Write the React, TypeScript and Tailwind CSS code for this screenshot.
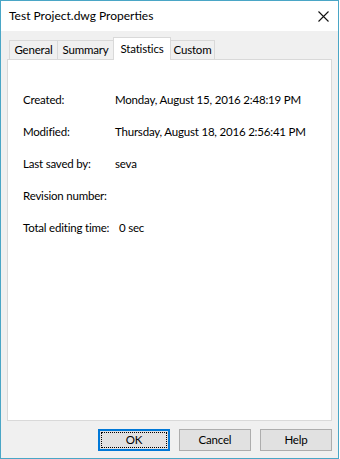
import React from 'react';

const tabs = [
  { name: 'General', w: 'w-[49px]' },
  { name: 'Summary', w: 'w-[57px]' },
  { name: 'Statistics', w: 'w-[58px]' },
  { name: 'Custom', w: 'w-[45px]' },
];

const rows = [
  { label: 'Created:', value: 'Monday, August 15, 2016 2:48:19 PM' },
  { label: 'Modified:', value: 'Thursday, August 18, 2016 2:56:41 PM' },
  { label: 'Last saved by:', value: 'seva' },
  { label: 'Revision number:', value: '' },
  { label: 'Total editing time:', value: '0 sec', shift: true },
];

export default function App() {
  return (
    <div className="w-[340px] h-[459px] bg-white" style={{ fontFamily: 'Lato, "Noto Sans", sans-serif' }}>
      <div className="w-[339px] h-[459px] border border-[#4aa6c6] flex flex-col text-[11.5px] tracking-[-0.2px] text-black whitespace-nowrap">
        {/* title bar */}
        <div className="h-[30px] bg-white flex items-center justify-between pl-[8px] pr-[9px]">
          <span className="text-[12px] tracking-normal">Test Project.dwg Properties</span>
          <svg width="11" height="11" viewBox="0 0 11 11">
            <path d="M0.5 0.5 L10.5 10.5 M10.5 0.5 L0.5 10.5" stroke="#111" strokeWidth="1.1" />
          </svg>
        </div>

        <div className="flex-1 bg-[#f0f0f0] flex flex-col px-[6px]">
          {/* tabs */}
          <div className="flex items-end h-[28px] pl-[2px]">
            {tabs.map((t, i) => {
              const active = t.name === 'Statistics';
              return (
                <div
                  key={t.name}
                  className={
                    (active
                      ? 'h-[23px] -mb-px bg-white border border-b-0 border-[#d9d9d9] flex justify-center items-start pt-[2px] relative z-10 '
                      : 'h-[19px] bg-[#f0f0f0] border border-b-0 border-[#d9d9d9] flex justify-center items-center ') +
                    t.w +
                    (i > 0 ? ' -ml-px' : '')
                  }
                >
                  {t.name}
                </div>
              );
            })}
          </div>

          {/* panel */}
          <div className="h-[362px] bg-white border border-[#d9d9d9] pt-[31px] pl-[15px] flex flex-col gap-[14px]">
            {rows.map((r) => (
              <div key={r.label} className="flex h-[18px] items-center">
                <span className="w-[92px]">{r.label}</span>
                <span className={r.shift ? 'ml-[4px]' : ''}>{r.value}</span>
              </div>
            ))}
          </div>

          {/* buttons */}
          <div className="flex justify-end gap-[9px] mt-[8px] pr-[0px]">
            <div className="w-[72px] h-[22px] bg-[#e1e1e1] border-2 border-[#0078d7] flex items-center justify-center p-px">
              <div className="w-full h-full border border-dotted border-black flex items-center justify-center">OK</div>
            </div>
            <div className="w-[72px] h-[22px] bg-[#e1e1e1] border border-[#adadad] flex items-center justify-center">Cancel</div>
            <div className="w-[72px] h-[22px] bg-[#e1e1e1] border border-[#adadad] flex items-center justify-center">Help</div>
          </div>
        </div>
      </div>
    </div>
  );
}
